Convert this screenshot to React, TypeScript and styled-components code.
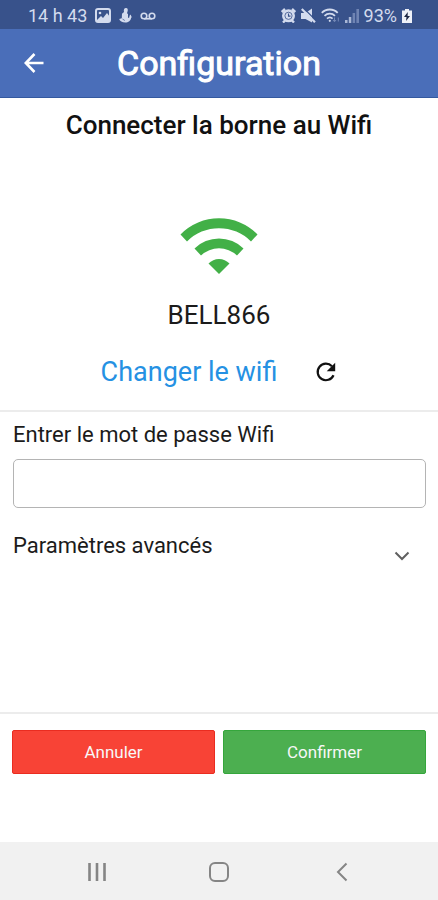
import React from "react";
import styled, { createGlobalStyle } from "styled-components";

const GlobalStyle = createGlobalStyle`
  * { box-sizing: border-box; }
  body {
    margin: 0;
    background: #ffffff;
    color: #1b1b1b;
    font-family: Roboto, "Liberation Sans", sans-serif;
  }
  button, input { font-family: inherit; }
  h1, h2, p { margin: 0; }
`;

const Screen = styled.div`
  min-height: 100vh;
  display: flex;
  flex-direction: column;
`;

const StatusBar = styled.div`
  display: flex;
  justify-content: space-between;
  align-items: center;
  height: 29px;
  padding: 2px 26px 0 28px;
  background: #38528b;
  color: #d3dbee;
  font-size: 18px;
  line-height: 24px;
`;

const StatusGroup = styled.div<{ $gap: number }>`
  display: flex;
  align-items: center;
  gap: ${(p) => p.$gap}px;
  svg { display: block; }
`;

const Header = styled.header`
  display: grid;
  grid-template-columns: 48px 1fr 48px;
  align-items: center;
  height: 69px;
  padding: 0 10px;
  background: #4a6eb9;
  border-bottom: 1px solid #34599f;
  color: #ffffff;
`;

const IconButton = styled.button`
  display: flex;
  align-items: center;
  justify-content: center;
  padding: 0;
  border: 0;
  background: none;
  color: inherit;
  cursor: pointer;
  svg { display: block; }
`;

const Title = styled.h1`
  text-align: center;
  font-size: 34px;
  line-height: 40px;
  font-weight: 400;
  -webkit-text-stroke: 1px currentColor;
`;

const Network = styled.section`
  display: flex;
  flex-direction: column;
  align-items: center;
  padding: 11px 12px 22px;
  border-bottom: 2px solid #ececec;
`;

const Heading = styled.h2`
  font-size: 26px;
  line-height: 32px;
  font-weight: 500;
  color: #111111;
`;

const WifiDrawing = styled.svg`
  display: block;
  margin-top: 77px;
`;

const NetworkName = styled.p`
  margin-top: 25px;
  font-size: 26px;
  line-height: 32px;
`;

const ChangeRow = styled.div`
  display: flex;
  align-items: center;
  gap: 38px;
  margin-top: 25px;
`;

const ChangeLink = styled.a`
  color: #2591e3;
  font-size: 27px;
  line-height: 32px;
  text-decoration: none;
`;

const Form = styled.form`
  flex: 1;
  display: flex;
  flex-direction: column;
`;

const Fields = styled.div`
  flex: 1;
  padding: 10px 12px 0 13px;
`;

const Label = styled.label`
  display: block;
  font-size: 22px;
  line-height: 26px;
`;

const Password = styled.input`
  display: block;
  width: 100%;
  height: 49px;
  margin-top: 11px;
  padding: 0 12px;
  border: 1px solid #b4b4b4;
  border-radius: 5px;
  background: #ffffff;
  font-size: 22px;
`;

const Advanced = styled.button`
  display: flex;
  justify-content: space-between;
  align-items: flex-start;
  width: 100%;
  margin-top: 25px;
  padding: 0 16px 0 0;
  border: 0;
  background: none;
  color: inherit;
  font-size: 22px;
  line-height: 26px;
  cursor: pointer;
  svg { display: block; margin-top: 18px; }
`;

const Actions = styled.div`
  display: grid;
  grid-template-columns: 1fr 1fr;
  gap: 8px;
  padding: 16px 12px 68px;
  border-top: 2px solid #ececec;
`;

const ActionButton = styled.button<{ $tone: "cancel" | "confirm" }>`
  height: 44px;
  border: 1px solid ${(p) => (p.$tone === "cancel" ? "#ea2c20" : "#35a63c")};
  border-radius: 2px;
  background: ${(p) => (p.$tone === "cancel" ? "#f84336" : "#4caf50")};
  color: #f7f7f7;
  font-size: 17px;
  cursor: pointer;
`;

const NavBar = styled.nav`
  display: flex;
  justify-content: space-around;
  align-items: center;
  height: 58px;
  padding: 2px 36px 0;
  background: #f1f1f1;
  color: #858585;
`;

const PictureIcon = () => (
  <svg width="16" height="15" viewBox="0 0 16 15" aria-hidden="true">
    <rect x="1" y="1" width="14" height="13" rx="2" fill="none" stroke="currentColor" strokeWidth="2" />
    <circle cx="5" cy="5" r="1.3" fill="currentColor" />
    <path d="M2 12 6 8l2 2 4-5 3 4v4H2z" fill="currentColor" />
  </svg>
);

const AnchorIcon = () => (
  <svg width="13" height="15" viewBox="0 0 13 15" aria-hidden="true">
    <path d="M7 0c2 0 2 2 1.600 3.200L8 5.200l1 .8v4c1-.1 1.500-.6 1.800-1.500L10 8.600l1.500-2 1.400 3-.8-.2c-.2 3.200-2.700 5.100-5.800 5.100C3.200 14.500.8 13.300.2 11l2.600-.7L3 5.800 5 4C4.500 2 5 0 7 0z" fill="currentColor" />
    <path d="M3.500 11l2.300 1.500" stroke="#38528b" strokeWidth="0.7" fill="none" />
  </svg>
);

const VoicemailIcon = () => (
  <svg width="16" height="8" viewBox="0 0 16 8" fill="none" stroke="currentColor" strokeWidth="1.600" aria-hidden="true">
    <circle cx="4" cy="4" r="2.800" />
    <circle cx="12" cy="4" r="2.800" />
    <path d="M4 6.800h8" />
  </svg>
);

const AlarmIcon = () => (
  <svg width="15" height="15" viewBox="0 0 15 15" aria-hidden="true">
    <circle cx="7.500" cy="7.800" r="6.500" fill="currentColor" />
    <path d="M.8 4 4 1M14.200 4 11 1M2 14.500l2.500-2.500M13 14.500l-2.500-2.500" stroke="currentColor" strokeWidth="2.400" />
    <circle cx="7.500" cy="7.800" r="3.600" fill="none" stroke="#38528b" strokeWidth="0.8" />
    <path d="M7.500 5.500v2.600h2" stroke="#38528b" strokeWidth="1.100" fill="none" />
  </svg>
);

const MuteIcon = () => (
  <svg width="15" height="15" viewBox="0 0 15 15" aria-hidden="true">
    <path d="M0 5h4.500L11 .5v14L4.500 11H0z" fill="currentColor" />
    <path d="M2.500 0 15 12.500" stroke="#38528b" strokeWidth="1.200" />
    <path d="M.8 1 14 14.200" stroke="currentColor" strokeWidth="2.200" />
  </svg>
);

const SmallWifiIcon = () => (
  <svg width="19" height="15" viewBox="0 0 19 15" fill="none" stroke="currentColor" strokeWidth="1.800" aria-hidden="true">
    <path d="M.8 4.800C5 .4 12.500.4 16.700 4.800M3.500 7.800c3-2.900 7.500-2.900 10.500 0M6 10.600c1.800-1.600 3.900-1.600 5.600 0" />
    <circle cx="8.800" cy="12.800" r="1.100" fill="currentColor" stroke="none" />
    <path d="M13.500 9.500v4M12 12l1.500 1.800L15 12M17.300 13.500v-4" stroke="#7388b6" strokeWidth="1" />
  </svg>
);

const SignalIcon = () => (
  <svg width="14" height="14" viewBox="0 0 14 14" aria-hidden="true">
    <path d="M0 11h2.500v3H0zM3.800 8h2.500v6H3.800z" fill="#a9b7d6" />
    <path d="M7.600 4h2.500v10H7.600zM11.400 0H14v14h-2.600z" fill="#6f84b3" />
  </svg>
);

const BatteryIcon = () => (
  <svg width="10" height="14" viewBox="0 0 10 14" aria-hidden="true">
    <path d="M3 0h4v1.500h3V14H0V1.500h3z" fill="#eef1f8" />
    <path d="M5.800 3 2 8h2.500L4 12l4-5H5.600z" fill="#1c2744" />
  </svg>
);

export default function App() {
  return (
    <Screen>
      <GlobalStyle />
      <StatusBar>
        <StatusGroup $gap={8}>
          <span>14 h 43</span>
          <PictureIcon />
          <AnchorIcon />
          <VoicemailIcon />
        </StatusGroup>
        <StatusGroup $gap={5}>
          <AlarmIcon />
          <MuteIcon />
          <SmallWifiIcon />
          <SignalIcon />
          <span>93%</span>
          <BatteryIcon />
        </StatusGroup>
      </StatusBar>

      <Header>
        <IconButton type="button" aria-label="Retour">
          <svg width="20" height="20" viewBox="0 0 20 20" fill="none" stroke="currentColor" strokeWidth="2.600">
            <path d="M19.500 10H2M10.500 1 1.800 10l8.700 9" />
          </svg>
        </IconButton>
        <Title>Configuration</Title>
      </Header>

      <Network>
        <Heading>Connecter la borne au Wifi</Heading>
        <WifiDrawing width="78" height="56" viewBox="0 0 78 56" fill="#42b047" aria-hidden="true">
          <path d="M.5 16.500A54 54 0 0 1 77.500 16.500L71 23.500A45 45 0 0 0 7 23.500Z" />
          <path d="M14.500 30.500A35 35 0 0 1 63.500 30.500L57 37.500A26 26 0 0 0 21 37.500Z" />
          <path d="M28.500 45.500A14.500 14.500 0 0 1 49.500 45.500L39 56Z" />
        </WifiDrawing>
        <NetworkName>BELL866</NetworkName>
        <ChangeRow>
          <ChangeLink href="#wifi">Changer le wifi</ChangeLink>
          <IconButton type="button" aria-label="Actualiser">
            <svg width="22" height="22" viewBox="0 0 24 24">
              <path d="M20.200 15.500A9 9 0 1 1 18.500 5.800" fill="none" stroke="#111111" strokeWidth="2.400" />
              <path d="M22 2v9.200h-9.200z" fill="#111111" />
            </svg>
          </IconButton>
        </ChangeRow>
      </Network>

      <Form onSubmit={(e) => e.preventDefault()}>
        <Fields>
          <Label htmlFor="password">Entrer le mot de passe Wifi</Label>
          <Password id="password" type="password" />
          <Advanced type="button" aria-expanded="false">
            <span>Paramètres avancés</span>
            <svg width="16" height="10" viewBox="0 0 16 10" fill="none" stroke="#606060" strokeWidth="2" aria-hidden="true">
              <path d="M1.500 1.500 8 8l6.500-6.500" />
            </svg>
          </Advanced>
        </Fields>
        <Actions>
          <ActionButton type="button" $tone="cancel">Annuler</ActionButton>
          <ActionButton type="submit" $tone="confirm">Confirmer</ActionButton>
        </Actions>
      </Form>

      <NavBar>
        <IconButton type="button" aria-label="Applications récentes">
          <svg width="20" height="20" viewBox="0 0 20 20" stroke="currentColor" strokeWidth="2.600">
            <path d="M2.500 1v18M10 1v18M17.500 1v18" />
          </svg>
        </IconButton>
        <IconButton type="button" aria-label="Accueil">
          <svg width="20" height="20" viewBox="0 0 20 20" fill="none" stroke="currentColor" strokeWidth="2">
            <rect x="1" y="1" width="18" height="18" rx="5" />
          </svg>
        </IconButton>
        <IconButton type="button" aria-label="Précédent">
          <svg width="20" height="20" viewBox="0 0 20 20" fill="none" stroke="currentColor" strokeWidth="2">
            <path d="M15.500 1.500 7 10l8.500 8.500" />
          </svg>
        </IconButton>
      </NavBar>
    </Screen>
  );
}
